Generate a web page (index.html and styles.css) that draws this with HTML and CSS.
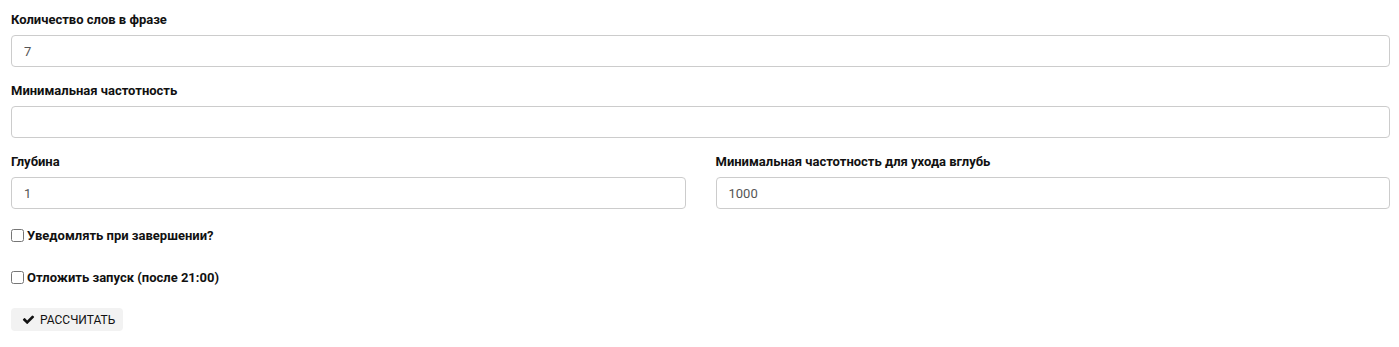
FILE: index.html
```html
<!DOCTYPE html>
<html lang="ru">
<head>
    <meta charset="UTF-8">
    <meta name="viewport" content="width=device-width, initial-scale=1.0">
    <title>Расчёт фраз</title>
    <link rel="stylesheet" href="styles.css">
</head>
<body>
    <form class="calc-form" id="calcForm">
        <div class="form-group">
            <label for="wordCount">Количество слов в фразе</label>
            <input type="text" id="wordCount" class="form-control" value="7">
        </div>

        <div class="form-group">
            <label for="minFreq">Минимальная частотность</label>
            <input type="text" id="minFreq" class="form-control">
        </div>

        <div class="form-row">
            <div class="form-group">
                <label for="depth">Глубина</label>
                <input type="text" id="depth" class="form-control" value="1">
            </div>
            <div class="form-group">
                <label for="depthFreq">Минимальная частотность для ухода вглубь</label>
                <input type="text" id="depthFreq" class="form-control" value="1000">
            </div>
        </div>

        <div class="check-group">
            <label class="check-label"><input type="checkbox" name="notify"> Уведомлять при завершении?</label>
        </div>

        <div class="check-group">
            <label class="check-label"><input type="checkbox" name="delay"> Отложить запуск (после 21:00)</label>
        </div>

        <button type="submit" class="btn">
            <svg class="btn-icon" viewBox="0 0 1792 1792" width="13" height="13"><path d="M1671 566q0 40-28 68l-724 724-136 136q-28 28-68 28t-68-28l-136-136-362-362q-28-28-28-68t28-68l136-136q28-28 68-28t68 28l294 295 656-657q28-28 68-28t68 28l136 136q28 28 28 68z"/></svg>
            Рассчитать
        </button>
    </form>
</body>
</html>
```

FILE: styles.css
```css
body {
    margin: 0;
    padding: 0;
    background: #fff;
    font-family: Roboto, "Liberation Sans", Arial, sans-serif;
    font-size: 13px;
    color: #111;
}
.calc-form {
    padding: 10px 9px 0 11px;
}
.form-group {
    margin-bottom: 14px;
}
.form-group label {
    display: block;
    font-weight: bold;
    line-height: 20px;
    margin-bottom: 5px;
}
.form-control {
    display: block;
    box-sizing: border-box;
    width: 100%;
    height: 32px;
    padding: 6px 12px;
    font-family: inherit;
    font-size: 13px;
    color: #555;
    background: #fff;
    border: 1px solid #ccc;
    border-radius: 4px;
    outline: none;
}
.form-row {
    display: grid;
    grid-template-columns: 1fr 1fr;
    gap: 30px;
}
.check-group {
    margin-top: 2px;
    margin-bottom: 21px;
    height: 21px;
}
.check-group + .check-group {
    margin-top: 0;
    margin-bottom: 20px;
}
.check-label {
    display: flex;
    align-items: center;
    gap: 3px;
    font-weight: bold;
    line-height: 21px;
}
.check-label input {
    margin: 0;
    width: 13px;
    height: 13px;
}
.btn {
    display: flex;
    align-items: center;
    gap: 5px;
    height: 23px;
    padding: 0 8px 0 11px;
    font-family: inherit;
    font-size: 12px;
    text-transform: uppercase;
    color: #111;
    background: #f2f2f2;
    border: none;
    border-radius: 4px;
    cursor: pointer;
}
.btn:hover {
    background: #e6e6e6;
}
.btn-icon {
    fill: #111;
}
```
